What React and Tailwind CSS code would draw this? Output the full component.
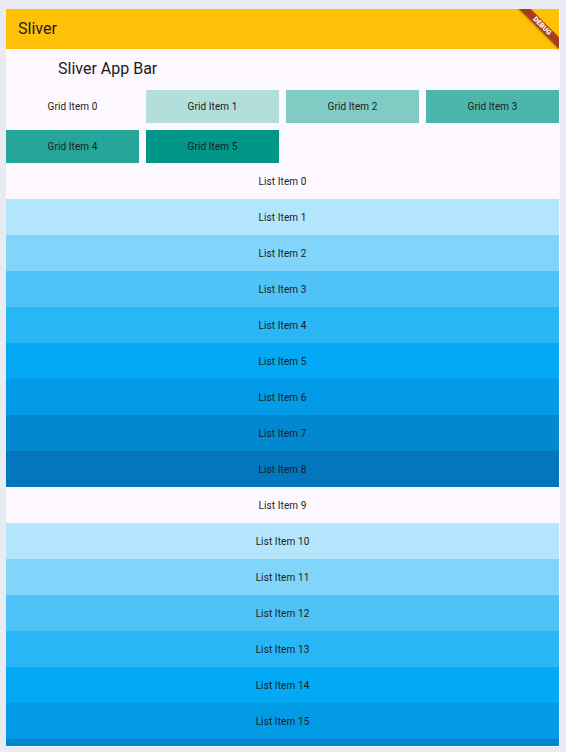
const gridColors = ["", "bg-[#b2dfdb]", "bg-[#80cbc4]", "bg-[#4db6ac]", "bg-[#26a69a]", "bg-[#009688]"];

const listColors = [
  "",
  "bg-[#b3e5fc]",
  "bg-[#81d4fa]",
  "bg-[#4fc3f7]",
  "bg-[#29b6f6]",
  "bg-[#03a9f4]",
  "bg-[#039be5]",
  "bg-[#0288d1]",
  "bg-[#0277bd]",
];

const App = () => {
  const items = Array.from({ length: 16 }, (_, i) => i);

  return (
    <div className="w-[566px] h-[752px] bg-[#e8ebf1] pl-[6px] pt-[9px] overflow-hidden font-['Roboto',sans-serif]">
      <div className="relative w-[553px] h-[737px] overflow-hidden bg-[#fdf7ff] shadow-[1px_1px_0_0_#f7f8fb] text-[#1d1b20]">
        <header className="h-[40px] bg-[#ffc107] flex items-center pl-[12px]">
          <h1 className="text-[16px] leading-none">Sliver</h1>
        </header>

        <div className="h-[40px] flex items-center pl-[52px]">
          <span className="text-[16px] leading-none">Sliver App Bar</span>
        </div>

        <div className="grid grid-cols-4 gap-[7px] pt-[1px]">
          {gridColors.map((c, i) => (
            <div key={i} className={`h-[33px] flex items-center justify-center text-[10px] tracking-[0.1px] ${c}`}>
              Grid Item {i}
            </div>
          ))}
        </div>

        <ul>
          {items.map(i => (
            <li key={i} className={`h-[36px] flex items-center justify-center text-[10px] tracking-[0.1px] ${listColors[i % 9]}`}>
              List Item {i}
            </li>
          ))}
          {/* item 16 is only partly in view, its label falls below the edge */}
          <li className="h-[36px] bg-[#0288d1]" />
        </ul>

        {/* debug ribbon */}
        <div className="absolute left-[501px] top-[12.6px] w-[70px] h-[8.4px] rotate-45 bg-[#ab3b1d] shadow-[0_1px_2px_rgba(0,0,0,0.35)] flex items-center justify-center">
          <span className="text-white text-[7px] font-black leading-none">DEBUG</span>
        </div>
      </div>
    </div>
  );
};

export default App;
